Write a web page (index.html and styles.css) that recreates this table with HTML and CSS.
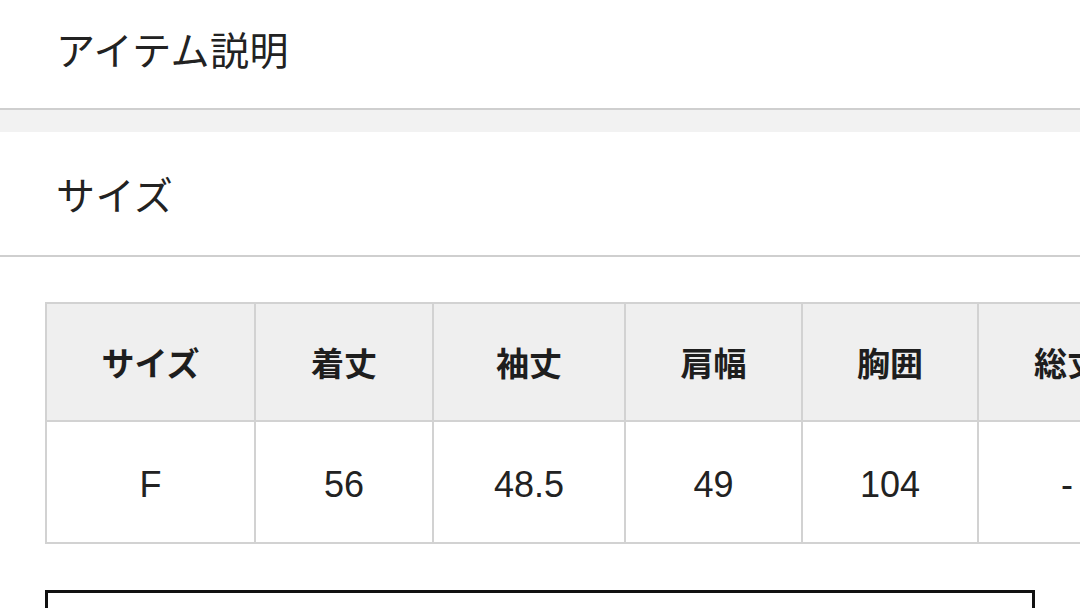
FILE: index.html
```html
<!DOCTYPE html>
<html lang="ja">
<head>
<meta charset="utf-8">
<link rel="stylesheet" href="styles.css">
</head>
<body>
<section class="panel panel-desc">
  <h2 class="panel-title">アイテム説明</h2>
</section>
<div class="spacer"></div>
<section class="panel panel-size">
  <h2 class="panel-title">サイズ</h2>
</section>
<div class="table-wrap">
  <table class="size-table">
    <colgroup>
      <col class="c1"><col class="c2"><col class="c3"><col class="c4"><col class="c5"><col class="c6">
    </colgroup>
    <thead>
      <tr><th>サイズ</th><th>着丈</th><th>袖丈</th><th>肩幅</th><th>胸囲</th><th>総丈</th></tr>
    </thead>
    <tbody>
      <tr><td>F</td><td>56</td><td>48.5</td><td>49</td><td>104</td><td>-</td></tr>
    </tbody>
  </table>
</div>
<div class="note-box"></div>
</body>
</html>
```
FILE: styles.css
```css
html, body {
  margin: 0;
  padding: 0;
  background: #fff;
  overflow: hidden;
  height: 608px;
}
body {
  font-family: "Noto Sans CJK JP", "Noto Sans", sans-serif;
  color: #222;
}
.panel {
  box-sizing: border-box;
  border-bottom: 2px solid #cfcfcf;
  display: flex;
  align-items: center;
  padding: 0 56px;
}
.panel-desc {
  height: 110px;
  padding-bottom: 12px;
}
.panel-size {
  height: 125px;
}
.panel-title {
  margin: 0;
  font-size: 39px;
  font-weight: 400;
  line-height: 1.4;
  letter-spacing: 0.5px;
}
.spacer {
  height: 22px;
  background: #f2f2f2;
}
.table-wrap {
  margin: 45px 0 0 45px;
  overflow: hidden;
  width: 1035px;
}
.size-table {
  border-collapse: separate;
  border-spacing: 0;
  table-layout: fixed;
  width: 1112px;
}
.c1 { width: 211px; }
.c2 { width: 178px; }
.c3 { width: 192px; }
.c4 { width: 177px; }
.c5 { width: 176px; }
.c6 { width: 178px; }
.size-table th,
.size-table td {
  border-right: 2px solid #d2d2d2;
  border-bottom: 2px solid #d2d2d2;
  padding: 0;
  text-align: center;
  white-space: nowrap;
  overflow: hidden;
}
.size-table th:first-child,
.size-table td:first-child {
  border-left: 2px solid #d2d2d2;
}
.size-table th {
  border-top: 2px solid #d2d2d2;
  background: #efefef;
  height: 116px;
  font-size: 33px;
  font-weight: 700;
  color: #1e1e1e;
}
.size-table td {
  height: 114px;
  padding-top: 6px;
  font-family: "Liberation Sans", Arial, sans-serif;
  font-size: 36px;
  color: #222;
}
.note-box {
  margin: 46px 0 0 45px;
  width: 990px;
  height: 40px;
  box-sizing: border-box;
  border: 3px solid #111;
  border-bottom: none;
}
```
